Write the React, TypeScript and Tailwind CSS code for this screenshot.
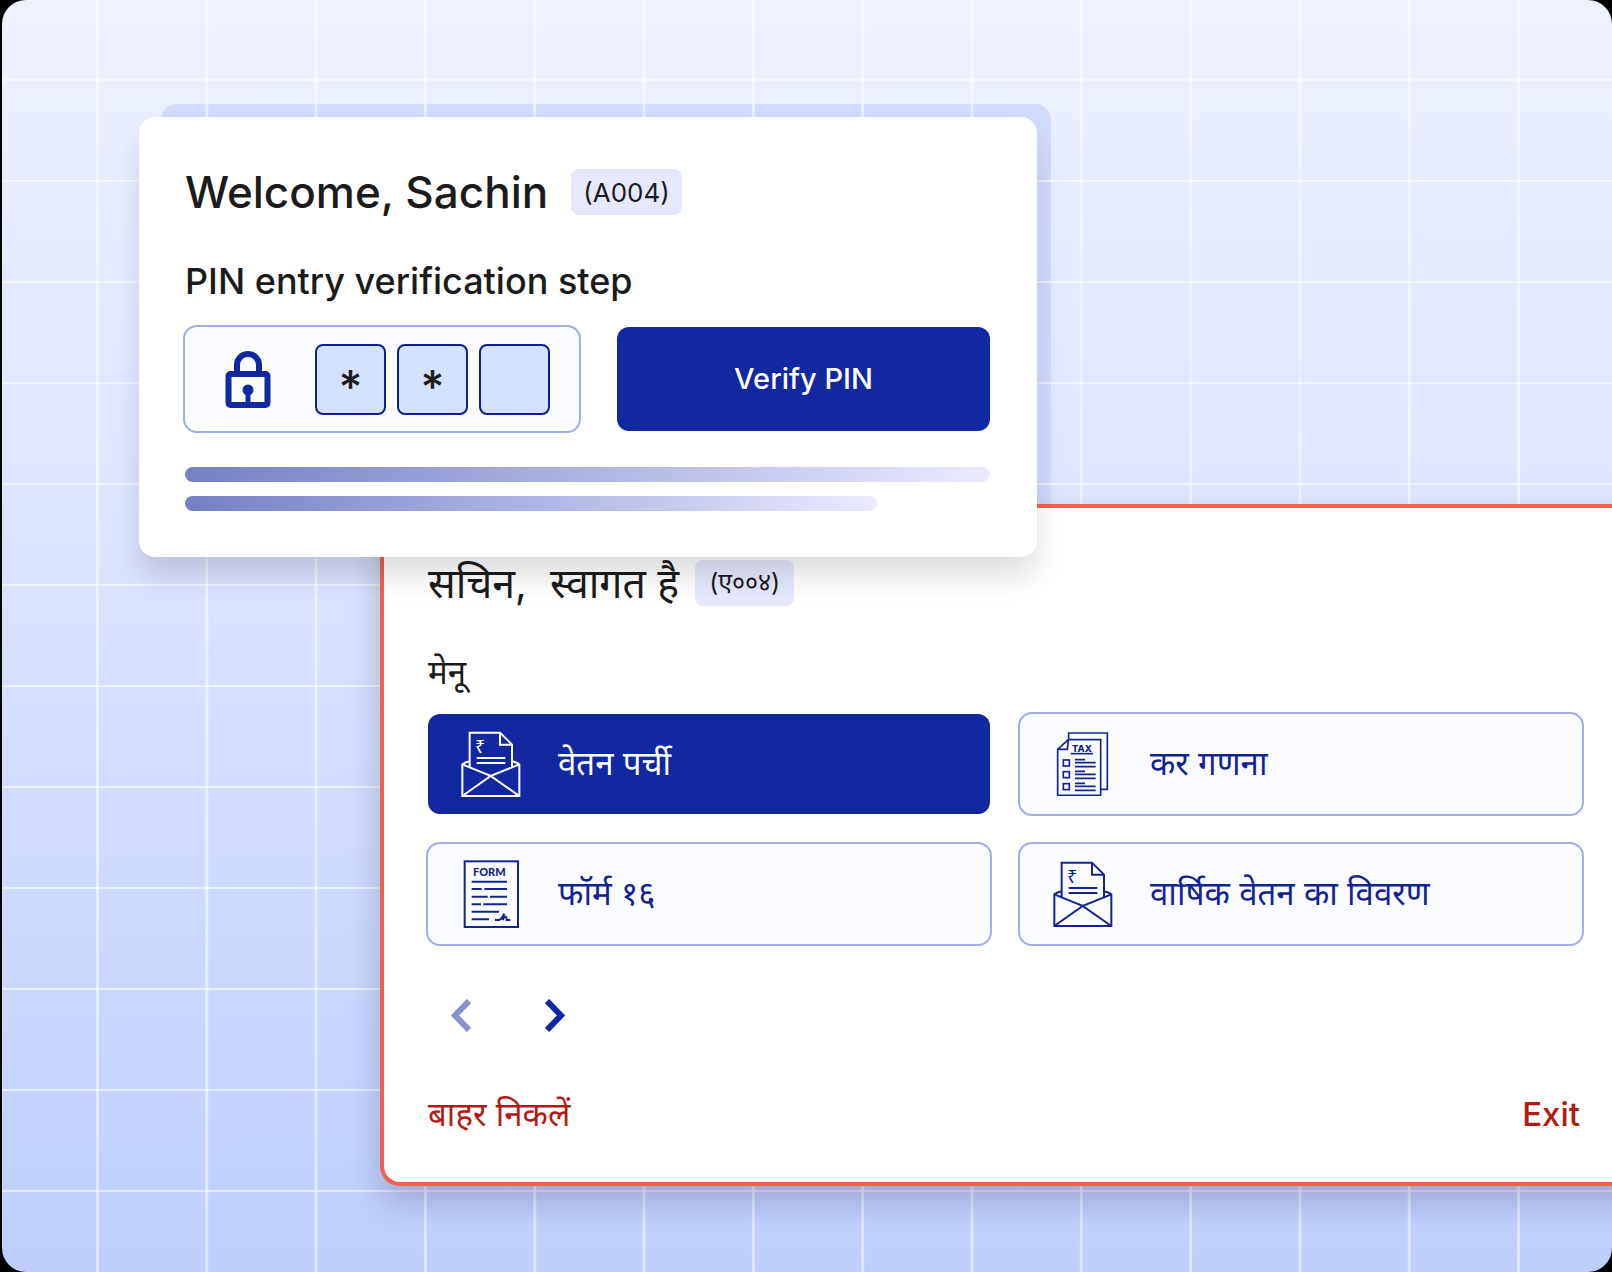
import { useState } from "react";

type IconProps = { className?: string };

function PayslipIcon({ className }: IconProps) {
  return (
    <svg viewBox="0 0 180 201" fill="none" stroke="currentColor" strokeWidth="6" className={className} aria-hidden="true">
      {/* paper with folded corner */}
      <path d="M26 109V5h91l36 36v68M117 5v36h36" />
      <path d="M47 81h86M47 96h86" />
      <text x="42" y="67" fontSize="54" stroke="none" fill="currentColor" className="font-['Noto_Sans']">₹</text>
      {/* open envelope */}
      <path d="M26 91Q12 94 4 100v95h171v-95q-8-6-22-9" />
      <path d="M4 100l22 9 63 26 64-26 22-9M4 195l85-60 86 60" />
    </svg>
  );
}

function TaxIcon({ className }: IconProps) {
  return (
    <svg viewBox="-11 0 180 194" fill="none" stroke="currentColor" strokeWidth="5" className={className} aria-hidden="true">
      <path d="M36 23V3h116v169h-20" />
      <path d="M35 23h97v167H3V52zM35 23l-3 29H3" />
      <text x="76" y="59" fontSize="28" fontWeight="800" textAnchor="middle" stroke="none" fill="currentColor" className="font-['Inter']">TAX</text>
      <path d="M42 65h67" />
      {[84, 119, 155].map((y) => (
        <g key={y}>
          <rect x="20" y={y} width="18" height="18" />
          <path d={`M55 ${y - 1}h30M55 ${y + 8}h62M55 ${y + 20}h62`} />
        </g>
      ))}
    </svg>
  );
}

function FormIcon({ className }: IconProps) {
  return (
    <svg viewBox="-7 0 180 206" fill="none" stroke="currentColor" strokeWidth="6" className={className} aria-hidden="true">
      <rect x="4" y="4" width="160" height="197" />
      <text x="78" y="47" fontSize="33" fontWeight="900" textAnchor="middle" stroke="none" fill="currentColor" className="font-['Lato']">FORM</text>
      <path d="M25 65h106M25 87h30M63 87h68M25 110h48M80 110h51M25 133h28M60 133h71M25 155h82M25 178h52" />
      <path d="M95 180h12q10-3 15-19l-4 19q6-12 9-10t3 10h11" />
    </svg>
  );
}

function LockIcon({ className }: IconProps) {
  return (
    <svg viewBox="0 0 46 57" fill="none" stroke="currentColor" strokeWidth="6" className={className} aria-hidden="true">
      <path d="M12 21v-7a11 11 0 0 1 22 0v7" />
      <rect x="3.5" y="23" width="39" height="31" rx="2" />
      <circle cx="23" cy="39" r="5.5" fill="currentColor" stroke="none" />
      <path d="M23 39v15" strokeWidth="5" />
    </svg>
  );
}

const menuItems = [
  { id: "payslip", label: "वेतन पर्ची", Icon: PayslipIcon },
  { id: "tax", label: "कर गणना", Icon: TaxIcon },
  { id: "form16", label: "फॉर्म १६", Icon: FormIcon },
  { id: "annual", label: "वार्षिक वेतन का विवरण", Icon: PayslipIcon },
];

function PinCard() {
  const [pin, setPin] = useState(["*", "*", ""]);

  return (
    <div className="relative ml-[139px] w-full max-w-[898px]">
      {/* Tinted sheet peeking out behind the card */}
      <div className="absolute -top-[13px] bottom-0 left-[22px] -right-[14px] z-0 rounded-2xl bg-[#d3dbfd]"></div>

      <form
        className="relative z-30 rounded-2xl bg-white pt-[52px] pr-[45px] pb-[46px] pl-[44px] shadow-[0_20px_30px_-2px_rgba(0,0,0,0.14)]"
        onSubmit={(e) => e.preventDefault()}
      >
        <div className="ml-[2px] flex h-[46px] items-center gap-[23px]">
          <h1 className="text-[44px] leading-none font-medium">Welcome, Sachin</h1>
          <span className="flex h-full items-center rounded-lg bg-[#e6e9fd] px-3 text-[26px]">(A004)</span>
        </div>
        <h2 className="mt-[46px] ml-[2px] text-[36px] leading-[40px] font-medium">PIN entry verification step</h2>

        <div className="mt-6 flex gap-[34px]">
          <div className="flex h-[108px] w-[398px] items-center rounded-[14px] border-2 border-[#a0aee4] bg-[#fafcff] pl-[40px]">
            <LockIcon className="h-[57px] w-[46px] text-[#1128a0]" />
            <div className="ml-[44px] flex gap-[11px]">
              {pin.map((digit, i) => (
                <input
                  key={i}
                  aria-label={`PIN digit ${i + 1}`}
                  maxLength={1}
                  value={digit}
                  onChange={(e) => setPin(pin.map((d, j) => (j === i ? e.target.value : d)))}
                  className="size-[71px] rounded-lg border-2 border-[#101f8f] bg-[#d5e2ff] pt-4 text-center text-[46px] font-medium"
                />
              ))}
            </div>
          </div>
          <button type="submit" className="flex-1 rounded-[14px] border-2 border-transparent bg-[#1128a0] bg-clip-padding text-[29px] font-medium text-white">
            Verify PIN
          </button>
        </div>

        <div className="mx-[2px] mt-[34px] flex flex-col gap-[14px]">
          <div className="h-[15px] rounded-full bg-linear-to-r from-[#7580c5] to-[#ebeaff]"></div>
          <div className="h-[15px] w-[86%] rounded-full bg-linear-to-r from-[#7580c5] to-[#ebeaff]"></div>
        </div>
      </form>
    </div>
  );
}

function MenuPanel() {
  const [active, setActive] = useState("payslip");

  return (
    <section
      lang="hi"
      className="relative z-20 -mt-[53px] -mr-10 ml-[380px] rounded-l-[20px] border-4 border-r-0 border-[#f0624d] bg-white pt-[52px] pr-[68px] pb-12 pl-[42px] shadow-[0_16px_32px_rgba(0,0,0,0.2)]"
    >
      <div className="ml-[2px] flex h-[46px] items-center gap-4">
        <h2 className="text-[41px] leading-none whitespace-pre">सचिन,  स्वागत है</h2>
        <span className="flex h-full items-center rounded-lg bg-[#e6e9fd] px-[14px] text-[25px]">(ए००४)</span>
      </div>
      <h3 className="mt-[46px] ml-[2px] text-[33px] leading-[40px]">मेनू</h3>

      <div className="mt-5 grid grid-cols-2 gap-[26px]">
        {menuItems.map(({ id, label, Icon }) => (
          <button
            key={id}
            onClick={() => setActive(id)}
            className={`flex h-[104px] items-center gap-[37px] rounded-[14px] border-2 pl-[33px] text-[33px] ${
              active === id ? "border-transparent bg-[#1128a0] bg-clip-padding text-white" : "border-[#a0aee4] bg-[#fafcff] text-[#14238f]"
            }`}
          >
            <Icon className="w-[60px]" />
            {label}
          </button>
        ))}
      </div>

      <div className="mt-[49px] ml-[15px] flex gap-[54px] text-[#1128a0]">
        <button aria-label="Previous" className="flex size-10 items-center justify-center opacity-50">
          <svg viewBox="0 0 20 33" fill="none" stroke="currentColor" strokeWidth="6" className="h-[33px] w-5">
            <path d="M18 2L4 16.500L18 31" />
          </svg>
        </button>
        <button aria-label="Next" className="flex size-10 items-center justify-center">
          <svg viewBox="0 0 20 33" fill="none" stroke="currentColor" strokeWidth="6" className="h-[33px] w-5">
            <path d="M2 2L16 16.500L2 31" />
          </svg>
        </button>
      </div>

      <div className="mt-[59px] flex justify-between pr-1 pl-[2px] text-[33px] leading-[40px] text-[#b01b16]">
        <a href="#exit">बाहर निकलें</a>
        <a href="#exit" lang="en" className="font-medium">Exit</a>
      </div>
    </section>
  );
}

export default function App() {
  return (
    <div className="min-h-screen bg-black pl-[2px] font-['Inter','Noto_Sans_Devanagari','Noto_Sans',sans-serif] text-[#1b1b1b]">
      <main className="relative min-h-screen overflow-hidden rounded-3xl bg-linear-to-b from-[#eef2ff] via-[#dde4fe] via-40% to-[#bfceff] pt-[117px]">
        {/* Grid drawn over the tinted sheet but under both cards */}
        <div className="absolute inset-0 z-10 bg-[linear-gradient(to_right,rgba(255,255,255,0.5)_3px,transparent_3px),linear-gradient(to_bottom,rgba(255,255,255,0.55)_2px,transparent_2px)] bg-size-[6.79%_101px] bg-position-[94px_79px]"></div>
        <div className="-ml-[2px]">
          <PinCard />
          <MenuPanel />
        </div>
      </main>
    </div>
  );
}
